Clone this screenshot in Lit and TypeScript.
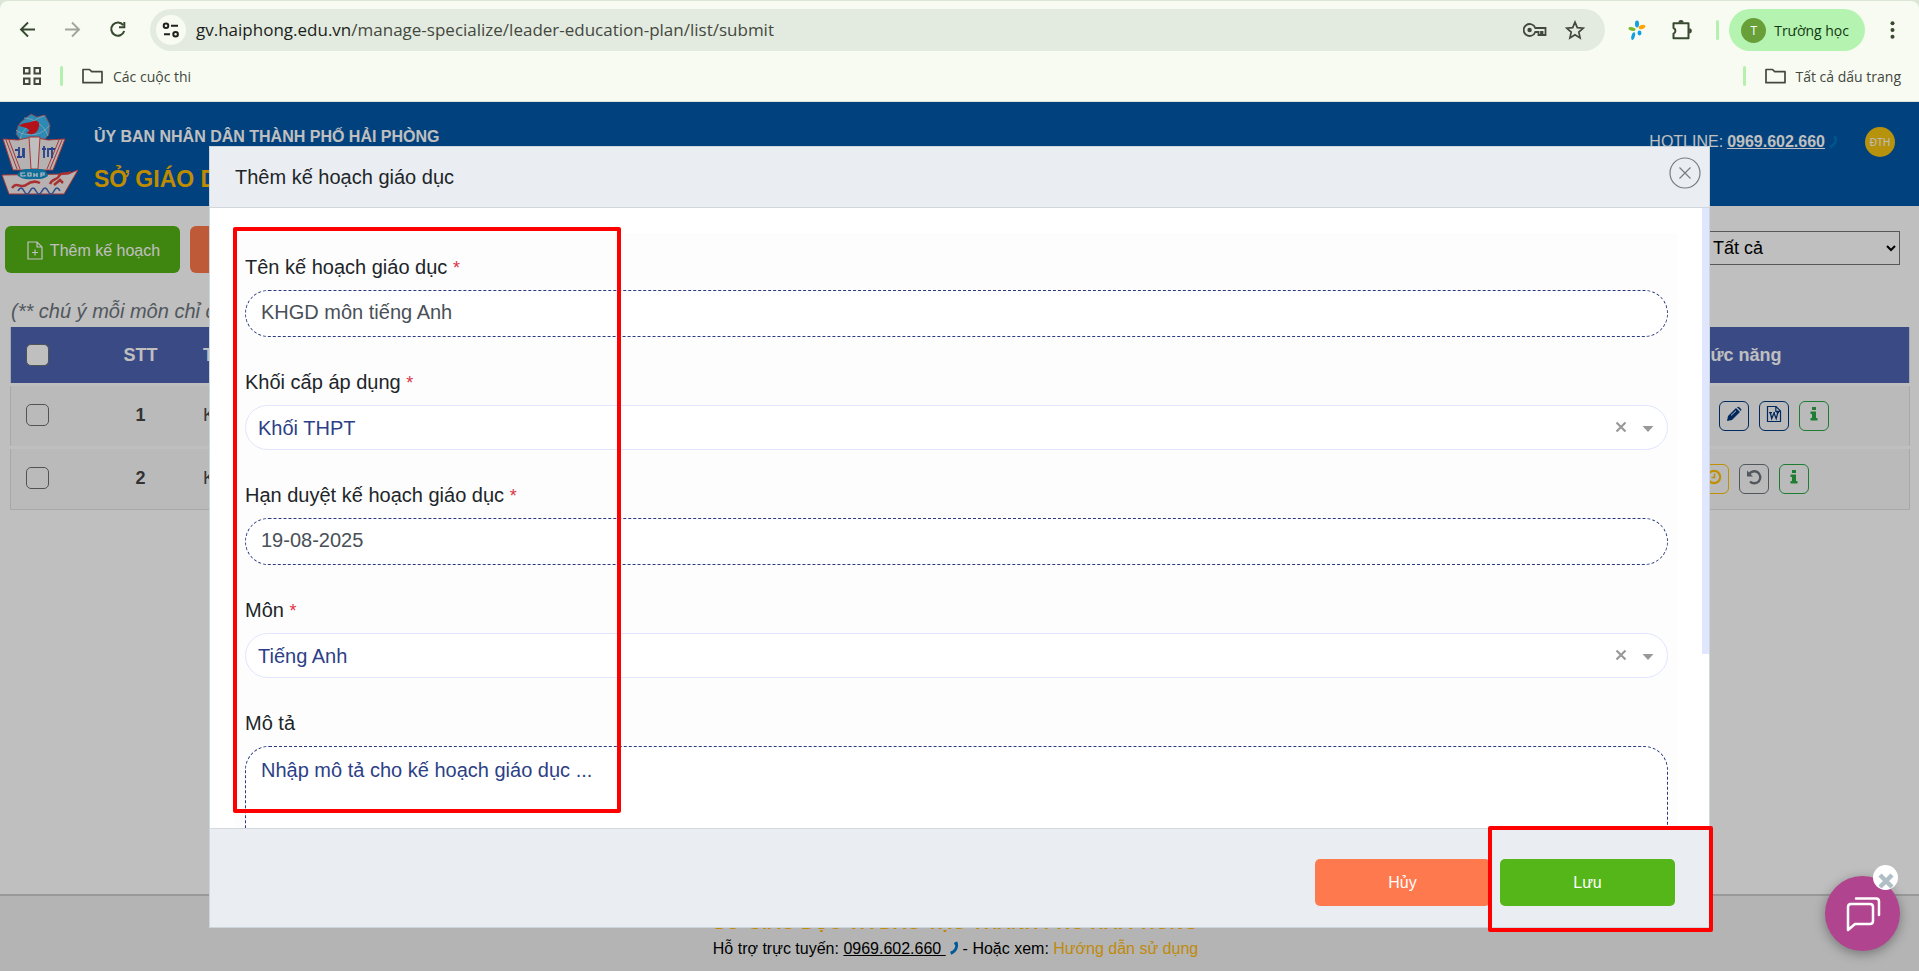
import { LitElement, html, css, svg } from "lit";
import { customElement } from "lit/decorators.js";

const phone = svg`<path d="M7.2 0.6 C9.4 4.6 7.6 11 1.2 13.8 L0.4 11.6 C0 10.8 0.6 10.6 1.6 10 L2.8 9.4 C4.6 7.8 5.4 6 5.2 4.2 L4.2 3 C3.8 2 4.2 1.4 5 1.2 Z" fill="currentColor"/>`;

@customElement("browser-bar")
class BrowserBar extends LitElement {
  static styles = css`
    :host {
      display: block;
      background: #dbe6d6;
      font-family: "Open Sans", "Noto Sans", sans-serif;
      color: #43483f;
    }
    .panel {
      background: #f8fbf2;
      border-radius: 8px 8px 0 0;
      margin-top: 1px;
      border-bottom: 1px solid #dce3d8;
    }
    button,
    a {
      border: 0;
      background: none;
      padding: 0;
      font: inherit;
      color: inherit;
      text-decoration: none;
      display: flex;
      align-items: center;
    }
    .tools {
      display: flex;
      align-items: center;
      padding: 8px 17px 5px 16px;
    }
    .nav {
      display: flex;
      gap: 21px;
      width: 134px;
    }
    .address {
      flex: 1;
      display: flex;
      align-items: center;
      height: 42px;
      border-radius: 21px;
      background: #e3ebe0;
      padding: 0 20px 0 6px;
    }
    .site {
      width: 30px;
      height: 30px;
      border-radius: 50%;
      background: #f8fbf2;
      justify-content: center;
      margin-right: 10px;
    }
    .url {
      flex: 1;
      min-width: 0;
      font-size: 17px;
      line-height: 24px;
      white-space: nowrap;
    }
    .host {
      color: #1b1d1a;
    }
    .marks {
      display: flex;
      gap: 18px;
    }
    .ext {
      display: flex;
      align-items: center;
      gap: 24px;
      padding: 0 10px 0 23px;
    }
    .bar {
      width: 3px;
      height: 20px;
      border-radius: 2px;
      background: #b5f1ae;
    }
    .profile {
      height: 42px;
      border-radius: 21px;
      background: #b5f3b0;
      padding: 0 16px 0 12px;
      gap: 8px;
      font-size: 14px;
      color: #10380f;
      margin-right: 18px;
    }
    .face {
      width: 25px;
      height: 25px;
      border-radius: 50%;
      background: #689f38;
      color: #fff;
      font-size: 12px;
      line-height: 25px;
      text-align: center;
    }
    .bookmarks {
      display: flex;
      align-items: center;
      height: 40px;
      padding: 0 18px 5px 23px;
      gap: 19px;
      font-size: 14px;
    }
    .folder {
      gap: 10px;
    }
    .space {
      flex: 1;
    }
  `;

  folder() {
    return html`<svg width="21" height="16" viewBox="0 0 21 16" fill="none" stroke="currentColor" stroke-width="1.7" stroke-linejoin="round"><path d="M1 1.5h6.5l2.2 2.2H20v11H1z" /></svg>`;
  }

  render() {
    return html`
      <div class="panel">
        <div class="tools">
          <div class="nav">
            <button aria-label="Quay lại"><svg width="24" height="24" viewBox="0 0 24 24" fill="none" stroke="#37492f" stroke-width="1.9"><path d="M19 11.5H5.5M12 4.5l-7 7 7 7" /></svg></button>
            <button aria-label="Tiến"><svg width="24" height="24" viewBox="0 0 24 24" fill="none" stroke="#a0a69c" stroke-width="1.9"><path d="M4 11.5h13.5M11 4.5l7 7-7 7" /></svg></button>
            <button aria-label="Tải lại"><svg width="24" height="24" viewBox="0 0 24 24" fill="none" stroke="#37492f" stroke-width="2"><path d="M17.2 7.2A6.6 6.6 0 1 0 18.2 13" /><path d="M18.3 4v5.3H13" /></svg></button>
          </div>
          <div class="address">
            <button class="site" aria-label="Thông tin trang web">
              <svg width="18" height="16" viewBox="0 0 18 16" fill="none" stroke="#1e211c" stroke-width="2"><circle cx="4" cy="3.8" r="2.3" /><path d="M9 3.8h7M2 12.2h6" /><circle cx="13.6" cy="12.2" r="2.3" /></svg>
            </button>
            <div class="url"><span class="host">gv.haiphong.edu.vn</span>/manage-specialize/leader-education-plan/list/submit</div>
            <div class="marks">
              <button aria-label="Mật khẩu"><svg width="24" height="14" viewBox="0 0 24 14" fill="none" stroke="currentColor" stroke-width="1.8"><path d="M12.3 5A6 6 0 1 0 12.3 9H15.5v3h2.5V9H19.5v3H22.5V5z" /><circle cx="6.6" cy="7" r="2.2" fill="currentColor" stroke="none" /></svg></button>
              <button aria-label="Đánh dấu"><svg width="20" height="20" viewBox="0 0 20 20" fill="none" stroke="currentColor" stroke-width="1.7"><path d="M10 2.2l2.3 5.5 6 .5-4.5 3.9 1.3 5.8L10 14.8l-5.1 3.1 1.3-5.8L1.7 8.2l6-.5z" /></svg></button>
            </div>
          </div>
          <div class="ext">
            <button aria-label="Tiện ích"><svg width="18" height="20" viewBox="0 0 18 20"><ellipse cx="9" cy="4" rx="2" ry="3.4" fill="#14a0e0" /><ellipse cx="14" cy="7" rx="3.4" ry="2" fill="#ffa400" transform="rotate(-20 14 7)" /><ellipse cx="4" cy="9" rx="3.6" ry="1.8" fill="#78b82a" transform="rotate(10 4 9)" /><ellipse cx="11.5" cy="13" rx="2" ry="2.4" fill="#14a0e0" /><ellipse cx="5.2" cy="16" rx="1.7" ry="4" fill="#14a0e0" transform="rotate(15 5 16)" /></svg></button>
            <button aria-label="Tiện ích mở rộng"><svg width="22" height="22" viewBox="0 0 22 22" fill="none" stroke="#37492f" stroke-width="2"><path d="M3.500 4.300h15v15h-15v-4.700a3 3 0 0 0 0-5.600z" stroke-linejoin="round" /><path d="M8.400 3.600a2.600 2.600 0 0 1 5.200 0zM19.200 9.200a2.600 2.600 0 0 1 0 5.200z" fill="#37492f" stroke="none" /></svg></button>
            <span class="bar"></span>
          </div>
          <button class="profile"><span class="face">T</span>Trường học</button>
          <button aria-label="Menu"><svg width="19" height="20" viewBox="0 0 19 20" fill="#37492f"><circle cx="9.5" cy="3.2" r="2" /><circle cx="9.5" cy="10" r="2" /><circle cx="9.5" cy="16.8" r="2" /></svg></button>
        </div>
        <div class="bookmarks">
          <button aria-label="Ứng dụng"><svg width="18" height="18" viewBox="0 0 18 18" fill="none" stroke="currentColor" stroke-width="2"><path d="M1 1h5.5v5.5H1zM11.500 1H17v5.500h-5.500zM1 11.500h5.500V17H1zM11.500 11.500H17V17h-5.500z" /></svg></button>
          <span class="bar"></span>
          <a class="folder" href="#">${this.folder()}Các cuộc thi</a>
          <span class="space"></span>
          <span class="bar"></span>
          <a class="folder" href="#">${this.folder()}Tất cả dấu trang</a>
        </div>
        <div class="edge"></div>
      </div>
    `;
  }
}

@customElement("site-header")
class SiteHeader extends LitElement {
  static styles = css`
    :host {
      display: flex;
      align-items: center;
      height: 104px;
      background: #0057a8;
      color: #fff;
    }
    .titles {
      flex: 1;
      padding: 12px 0 0 16px;
    }
    .city {
      font-size: 16px;
      line-height: 24px;
      font-weight: bold;
      margin: 0 0 14px;
    }
    .name {
      font-size: 23px;
      line-height: 32px;
      font-weight: bold;
      color: #ffbb00;
      margin: 0;
    }
    .contact {
      display: flex;
      align-items: center;
      align-self: flex-start;
      padding-top: 25px;
      padding-right: 24px;
    }
    .tel {
      color: inherit;
      font-weight: bold;
      margin: 0 4px;
    }
    .call {
      color: #0070bd;
    }
    .avatar {
      width: 30px;
      height: 30px;
      border: 0;
      padding: 0;
      border-radius: 50%;
      background: #f5c311;
      color: #fff;
      font: 10px "Liberation Sans", Arial, sans-serif;
      margin-left: 28px;
    }
  `;

  render() {
    return html`
      <svg width="78" height="82" viewBox="0 0 78 82">
        <path d="M21 9l6-5 4-3 6 3 8-2 2 4 3 6-1 9-6 8H22l-6-8 2-8z" fill="#3cb8f0" stroke="#c9565a" stroke-width="0.800" />
        <path d="M16 17c6 6 24 8 33-4M24 5c8 0 20 6 24 18M44 3c-8 2-22 12-24 24" fill="none" stroke="#b8dff2" stroke-width="0.800" />
        <path d="M19 13c5-4 8-3 12-4 6-3 9 0 8 4-1 7-6 10-13 7 3-1 4-3 2-4-3-2-5-2-9-3z" fill="#f01820" />
        <path d="M3 26l15 1 14-3 16 3 17-1-12 31H13z" fill="#f4eeee" stroke="#e04848" />
        <path d="M6 27l11 29M9 27l11 29M62 27L50 56M59 27L47 56" fill="none" stroke="#e04848" />
        <path d="M15 37h3m1-3v11m4-10v9m-6 0h5m2-9v10M42 36h4m-2-3v12m4-10v9m1-8h6m-3-2v11" fill="none" stroke="#3458b8" stroke-width="1.800" />
        <path d="M29 24h11l-2 32h-7z" fill="#fff" stroke="#e04848" />
        <path d="M2 62l66-1 10-4-14 24H9z" fill="#f5eded" stroke="#e04848" />
        <path d="M17 62c3-5 6-6 11-6h13c4 0 6 3 7 7-5 4-10 3-15 3-7 1-12 0-16-4z" fill="#1593cc" />
        <path d="M25 60h-4v3h4v-1M28 60v3h3v-3zM34 60v4m0-2h3m0-2v4M41 64v-4h3v2h-3" fill="none" stroke="#fff" stroke-width="1.200" />
        <path d="M12 75c5-7 9 1 14-3s10-4 14-2M50 71c2-6 8-4 9-8s8-1 12-4M54 72l6-5 3 3" fill="none" stroke="#e04040" stroke-width="2.500" />
        <path d="M18 78c2-4 4-4 6 0s4 4 6 0 4-4 6 0 4 4 6 0 4-4 6 0 4 4 6 0 4-4 6 0" fill="none" stroke="#4268bb" stroke-width="1.600" />
      </svg>
      <div class="titles">
        <p class="city">ỦY BAN NHÂN DÂN THÀNH PHỐ HẢI PHÒNG</p>
        <p class="name">SỞ GIÁO DỤC VÀ ĐÀO TẠO</p>
      </div>
      <div class="contact">
        <span>HOTLINE: </span><a class="tel" href="tel:0969602660">0969.602.660</a>
        <svg class="call" width="8" height="14" viewBox="0 0 8 14">${phone}</svg>
        <button class="avatar">ĐTH</button>
      </div>
    `;
  }
}

const icons: Record<string, unknown> = {
  eye: svg`<path d="M1 7c3-6 11-6 14 0-3 6-11 6-14 0z" fill="none" stroke="currentColor" stroke-width="2"/><circle cx="8" cy="7" r="2.500" fill="currentColor"/>`,
  pencil: svg`<path d="M1 15l1-5 8-8 4 4-8 8zM11 1.300c1-1 1.600-.8 2.600.2l1.200 1.200c.8.800.8 1.500 0 2.300z" fill="currentColor"/><path d="M5 9.500L10 4.800" stroke="#f9f9f9"/>`,
  word: svg`<path d="M1.500.500h8.500l4.500 4.500v10.500h-13zM9.800.8v4.500h4.500" fill="none" stroke="currentColor" stroke-width="1.200"/><path d="M3 6.600h3M7.500 6.600h1.500M10.500 6.600h2.500M4.300 6.600l1.400 6 2.300-5.500 2.200 5.500 1.600-6" fill="none" stroke="currentColor" stroke-width="1.300"/>`,
  info: svg`<path d="M6 1h4v3H6zM4.500 5.500H10V12h1.500v2.500h-7V12H6V8H4.500z" fill="currentColor"/>`,
  clock: svg`<circle cx="8" cy="8" r="6.200" fill="none" stroke="currentColor" stroke-width="2.200"/><path d="M8.500 4.500v4H5.500" fill="none" stroke="currentColor" stroke-width="1.500"/>`,
  undo: svg`<path d="M3 5.500A6 6 0 1 1 4 12.500" fill="none" stroke="currentColor" stroke-width="2.400"/><path d="M1 1.500v6h6z" fill="currentColor"/>`,
};

@customElement("plan-list")
class PlanList extends LitElement {
  static styles = css`
    :host {
      display: block;
      flex: 1;
    }
    .toolbar {
      display: flex;
      align-items: flex-start;
      gap: 10px;
      padding: 20px 19px 0 5px;
    }
    .add,
    .remove {
      display: flex;
      align-items: center;
      justify-content: center;
      gap: 7px;
      width: 175px;
      height: 47px;
      border: 0;
      padding: 2px 0 0 2px;
      border-radius: 6px;
      color: #fff;
      font: 16px "Liberation Sans", Arial, sans-serif;
      background: #55b316;
    }
    .remove {
      background: #ff784b;
    }
    .filter {
      margin-left: auto;
      margin-top: 5px;
      width: 192px;
      height: 34px;
      border: 1px solid #767676;
      border-radius: 0;
      background: #fff;
      color: #000;
      font: 18px "Liberation Sans", Arial, sans-serif;
    }
    .note {
      margin: 24px 0 0 11px;
      font-size: 20px;
      line-height: 28px;
      font-style: italic;
      color: #6c757d;
    }
    .frame {
      padding: 0 9px 0 10px;
    }
    table {
      width: 100%;
      border-collapse: separate;
      border-spacing: 0 3px;
      table-layout: fixed;
      margin-top: -1px;
    }
    th {
      height: 56px;
      background: #4d63b1;
      color: #fff;
      font-size: 18px;
      padding: 0;
    }
    td {
      height: 58px;
      background: #f9f9f9;
      padding: 0 0 2px;
      color: #4a4a4a;
      font-size: 18px;
    }
    tr > :first-child {
      border-left: 1px solid #dee2e6;
      padding-left: 15px;
      text-align: left;
    }
    tr > :last-child {
      border-right: 1px solid #dee2e6;
    }
    tbody tr:last-child td {
      border-bottom: 1px solid #dee2e6;
    }
    .pick {
      width: 60px;
    }
    .num {
      width: 109px;
      text-align: center;
      font-weight: bold;
    }
    td.num {
      color: #444;
    }
    .title {
      text-align: left;
      padding-left: 8px;
    }
    .actions {
      width: 350px;
      text-align: center;
    }
    input {
      appearance: none;
      display: block;
      width: 23px;
      height: 22px;
      margin: 0;
      border: 1px solid #6b7075;
      border-radius: 5px;
      background: #fff;
    }
    td input {
      background: none;
    }
    .set {
      display: flex;
      gap: 10px;
      justify-content: center;
      padding-top: 2px;
    }
    .act {
      width: 30px;
      height: 30px;
      padding: 0 0 4px;
      display: flex;
      align-items: center;
      justify-content: center;
      border: 1px solid currentColor;
      border-radius: 6px;
      background: none;
    }
    .navy {
      color: #00397d;
    }
    .green {
      color: #28a745;
    }
    .amber {
      color: #ffc107;
    }
    .grey {
      color: #6c757d;
    }
  `;

  rows = [
    { name: "KHGD Tiếng Anh", acts: [["eye", "navy"], ["clock", "amber"], ["pencil", "navy"], ["word", "navy"], ["info", "green"]] },
    { name: "KHGD Ngữ văn", acts: [["eye", "navy"], ["clock", "amber"], ["undo", "grey"], ["info", "green"]] },
  ];

  render() {
    return html`
      <div class="toolbar">
        <button class="add">
          <svg width="16" height="19" viewBox="0 0 16 19" fill="none" stroke="currentColor" stroke-width="1.200"><path d="M1 1h9l5 5v12H1zM10 1v5h5M8 8.500v6M5 11.500h6" /></svg>
          Thêm kế hoạch
        </button>
        <button class="remove">Xóa</button>
        <select class="filter" aria-label="Bộ lọc"><option>Tất cả</option></select>
      </div>
      <p class="note">(** chú ý mỗi môn chỉ chọn một kế hoạch giáo dục)</p>
      <div class="frame">
        <table>
          <thead>
            <tr>
              <th class="pick"><input type="checkbox" aria-label="Chọn tất cả" /></th>
              <th class="num">STT</th>
              <th class="title">Tên kế hoạch</th>
              <th class="actions">Chức năng</th>
            </tr>
          </thead>
          <tbody>
            ${this.rows.map(
              (row, i) => html`<tr>
                <td class="pick"><input type="checkbox" aria-label="Chọn dòng ${i + 1}" /></td>
                <td class="num">${i + 1}</td>
                <td class="title">${row.name}</td>
                <td class="actions">
                  <div class="set">
                    ${row.acts.map(([icon, tone]) => html`<button class="act ${tone}" aria-label=${icon}><svg width="16" height="16" viewBox="0 0 16 16">${icons[icon]}</svg></button>`)}
                  </div>
                </td>
              </tr>`
            )}
          </tbody>
        </table>
      </div>
    `;
  }
}

@customElement("plan-dialog")
class PlanDialog extends LitElement {
  static styles = css`
    :host {
      display: flex;
      flex-direction: column;
      position: relative;
      box-sizing: border-box;
      width: min(1501px, 100% - 40px);
      background: #fff;
      border: 1px solid #cdd6dc;
    }
    .head {
      display: flex;
      align-items: center;
      justify-content: space-between;
      height: 60px;
      background: #eaeef2;
      border-bottom: 1px solid #d0d8dd;
      padding: 0 8px 0 25px;
    }
    h2 {
      margin: 0;
      font-size: 20px;
      line-height: 28px;
      font-weight: normal;
      color: #212529;
    }
    .close {
      border: 0;
      background: none;
      padding: 0 0 8px;
      line-height: 0;
    }
    .body {
      flex: 1;
      min-height: 0;
      overflow: hidden;
      position: relative;
      padding: 25px 31px 0 25px;
    }
    .thumb {
      position: absolute;
      top: 0;
      right: 0;
      width: 7px;
      height: 72%;
      background: #e0e6fd;
    }
    .form {
      display: flex;
      flex-direction: column;
      gap: 30px;
      background: #fdfdfd;
      padding: 19px 10px 30px;
    }
    .field {
      display: flex;
      flex-direction: column;
      gap: 8px;
    }
    label {
      font-size: 20px;
      line-height: 30px;
      color: #212529;
    }
    .star {
      color: #dc3545;
      font-size: 18px;
      line-height: 18px;
    }
    .text,
    textarea {
      box-sizing: border-box;
      width: 100%;
      height: 47px;
      border: 1px dashed #2b3a80;
      border-radius: 24px;
      background: #fff;
      padding: 0 15px 2px;
      font: 20px "Liberation Sans", Arial, sans-serif;
      color: #495057;
      display: block;
      resize: none;
      outline: 0;
    }
    textarea {
      height: 240px;
      padding: 8px 15px;
      line-height: 30px;
    }
    textarea::placeholder {
      color: #2d3f86;
      opacity: 1;
    }
    .combo {
      display: flex;
      align-items: center;
      box-sizing: border-box;
      height: 45px;
      border: 1px solid #e0e6fd;
      border-radius: 23px;
      background: #fff;
      padding-right: 13px;
    }
    .combo select {
      appearance: none;
      flex: 1;
      align-self: stretch;
      border: 0;
      background: none;
      padding: 0 12px;
      font: 20px "Liberation Sans", Arial, sans-serif;
      color: #2d3f86;
    }
    .clear {
      border: 0;
      background: none;
      padding: 0 0 2px;
      margin-right: 15px;
      line-height: 0;
    }
    .foot {
      display: flex;
      justify-content: flex-end;
      gap: 10px;
      box-sizing: border-box;
      height: 99px;
      padding: 30px 34px 0;
      background: #eaeef2;
      border-top: 1px solid #d3dadf;
    }
    .btn {
      width: 175px;
      height: 47px;
      border: 0;
      border-radius: 5px;
      color: #fff;
      font: 16px "Liberation Sans", Arial, sans-serif;
    }
    .cancel {
      background: #ff794e;
    }
    .save {
      background: #55b61a;
    }
    .mark {
      position: absolute;
      box-sizing: border-box;
      border: 4px solid #f00;
      border-radius: 2px;
      pointer-events: none;
    }
    .mark-fields {
      left: 23px;
      top: 80px;
      width: 388px;
      bottom: 114px;
    }
    .mark-save {
      right: -4px;
      bottom: -5px;
      width: 225px;
      height: 106px;
    }
  `;

  star() {
    return html`<span class="star">*</span>`;
  }

  text(id: string, label: string, value: string) {
    return html`<div class="field">
      <label for=${id}>${label} ${this.star()}</label>
      <input class="text" id=${id} .value=${value} />
    </div>`;
  }

  combo(id: string, label: string, value: string) {
    return html`<div class="field">
      <label for=${id}>${label} ${this.star()}</label>
      <div class="combo">
        <select id=${id}><option>${value}</option></select>
        <button type="button" class="clear" aria-label="Xóa lựa chọn"><svg width="12" height="12" viewBox="0 0 12 12" stroke="#999" stroke-width="2.200"><path d="M1.500 1.500l9 9M10.500 1.500l-9 9" /></svg></button>
        <svg width="12" height="8" viewBox="0 0 12 8" fill="#999"><path d="M.500 2h11L6 8z" /></svg>
      </div>
    </div>`;
  }

  render() {
    return html`
      <div class="head">
        <h2>Thêm kế hoạch giáo dục</h2>
        <button class="close" aria-label="Đóng"><svg width="32" height="32" viewBox="0 0 32 32" fill="none" stroke="#777b80" stroke-width="1.200"><circle cx="16" cy="16" r="15" /><path d="M10.500 10.500l11 11M21.500 10.500l-11 11" /></svg></button>
      </div>
      <div class="body">
        <form class="form">
          ${this.text("name", "Tên kế hoạch giáo dục", "KHGD môn tiếng Anh")}
          ${this.combo("grade", "Khối cấp áp dụng", "Khối THPT")}
          ${this.text("deadline", "Hạn duyệt kế hoạch giáo dục", "19-08-2025")}
          ${this.combo("subject", "Môn", "Tiếng Anh")}
          <div class="field">
            <label for="about">Mô tả</label>
            <textarea id="about" placeholder="Nhập mô tả cho kế hoạch giáo dục ..."></textarea>
          </div>
        </form>
        <div class="thumb"></div>
      </div>
      <div class="foot">
        <button class="btn cancel">Hủy</button>
        <button class="btn save">Lưu</button>
      </div>
      <div class="mark mark-fields"></div>
      <div class="mark mark-save"></div>
    `;
  }
}

@customElement("app-root")
class AppRoot extends LitElement {
  static styles = css`
    :host {
      display: flex;
      flex-direction: column;
      height: 100vh;
      overflow: hidden;
      font: 16px "Liberation Sans", Arial, sans-serif;
    }
    browser-bar {
      flex: none;
      height: 102px;
      background: linear-gradient(#dbe6d6 50%, #f8fbf2 50%);
    }
    .site {
      flex: 1;
      min-height: 0;
      position: relative;
      display: flex;
      flex-direction: column;
      background: #fff;
    }
    .footer {
      box-sizing: border-box;
      height: 77px;
      border-top: 2px solid #ccc;
      background: #f0f0f0;
      text-align: center;
      padding: 13px 8px 0 0;
    }
    .org {
      margin: 0;
      font-size: 19px;
      line-height: 28px;
      font-weight: bold;
      color: #ffb90f;
    }
    .help {
      margin: 0;
      line-height: 24px;
      color: #000;
    }
    .help a {
      color: inherit;
    }
    .help .guide {
      color: #ffb90f;
      text-decoration: none;
    }
    .call {
      color: #0077cc;
      vertical-align: -1px;
    }
    .shade {
      position: absolute;
      inset: 0;
      display: flex;
      justify-content: center;
      padding: 44px 0 43px;
      background: rgba(0, 0, 0, 0.25);
    }
    .chat {
      position: absolute;
      right: 19px;
      bottom: 20px;
      width: 75px;
      height: 75px;
    }
    .open {
      width: 75px;
      height: 75px;
      border: 0;
      padding: 0;
      border-radius: 50%;
      background: #b0448f;
      box-shadow: 0 3px 12px rgba(0, 0, 0, 0.35);
      display: flex;
      align-items: center;
      justify-content: center;
    }
    .dismiss {
      position: absolute;
      top: -11px;
      right: 2px;
      width: 25px;
      height: 25px;
      border: 0;
      padding: 7px 0 0;
      border-radius: 50%;
      background: #fff;
      display: flex;
      align-items: center;
      justify-content: center;
    }
  `;

  render() {
    return html`
      <browser-bar></browser-bar>
      <div class="site">
        <site-header></site-header>
        <plan-list></plan-list>
        <footer class="footer">
          <p class="org">SỞ GIÁO DỤC VÀ ĐÀO TẠO THÀNH PHỐ HẢI PHÒNG</p>
          <p class="help">
            Hỗ trợ trực tuyến: <a href="tel:0969602660">0969.602.660&nbsp;</a>
            <svg class="call" width="8" height="14" viewBox="0 0 8 14">${phone}</svg>
            - Hoặc xem: <a class="guide" href="#">Hướng dẫn sử dụng</a>
          </p>
        </footer>
        <div class="shade"><plan-dialog></plan-dialog></div>
        <div class="chat">
          <button class="open" aria-label="Trò chuyện"><svg width="36" height="36" viewBox="0 0 36 36" fill="none" stroke="#fff" stroke-width="2.500" stroke-linejoin="round" stroke-linecap="round"><path d="M5 8h20q3 0 3 3v14q0 3-3 3H10l-7 6V11q0-3 3-3z" /><path d="M11 2.500h20q3 0 3 3V19" /></svg></button>
          <button class="dismiss" aria-label="Ẩn"><svg width="16" height="16" viewBox="0 0 16 16" stroke="#b0bec5" stroke-width="4.500"><path d="M2 2l12 12M14 2L2 14" /></svg></button>
        </div>
      </div>
    `;
  }
}
